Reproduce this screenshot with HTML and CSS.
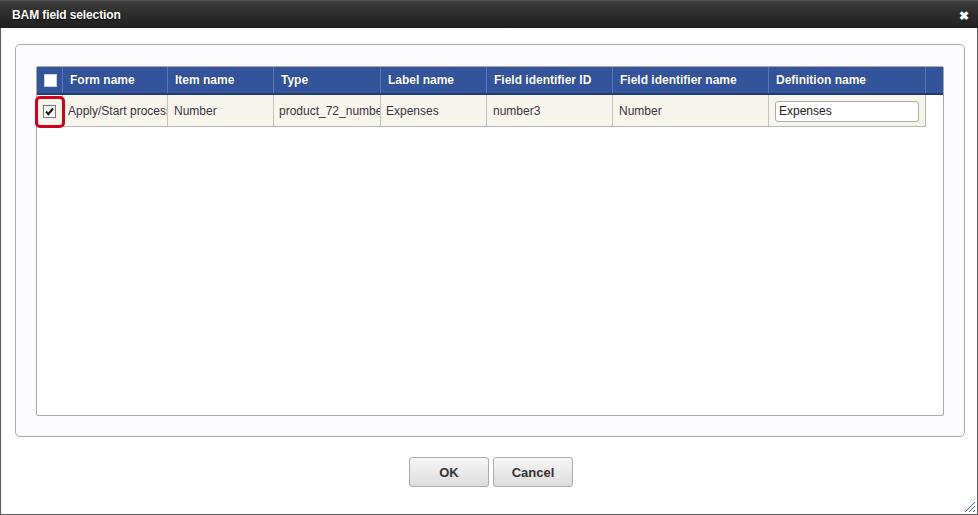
FILE: index.html
```html
<!DOCTYPE html>
<html>
<head>
<meta charset="utf-8">
<link rel="stylesheet" href="styles.css">
</head>
<body>
<div class="window">
  <div class="titlebar">
    <span class="title">BAM field selection</span>
    <span class="close">&#x2716;</span>
  </div>
  <div class="content">
    <div class="panel">
      <div class="grid">
        <div class="head">
          <div class="c c-chk"><span class="box"></span></div>
          <div class="c c-form">Form name</div>
          <div class="c c-item">Item name</div>
          <div class="c c-type">Type</div>
          <div class="c c-label">Label name</div>
          <div class="c c-fid">Field identifier ID</div>
          <div class="c c-fin">Field identifier name</div>
          <div class="c c-def">Definition name</div>
          <div class="c c-pad"></div>
        </div>
        <div class="row">
          <div class="c c-chk">
            <span class="box checked"><svg width="11" height="11" viewBox="0 0 11 11"><path d="M2 5.5 L4.3 8.2 L9 2.5" fill="none" stroke="#111" stroke-width="2"/></svg></span>
            <span class="highlight"></span>
          </div>
          <div class="c c-form">Apply/Start process</div>
          <div class="c c-item">Number</div>
          <div class="c c-type">product_72_number3</div>
          <div class="c c-label">Expenses</div>
          <div class="c c-fid">number3</div>
          <div class="c c-fin">Number</div>
          <div class="c c-def"><span class="input">Expenses</span></div>
        </div>
      </div>
    </div>
    <div class="buttons">
      <span class="btn">OK</span>
      <span class="btn">Cancel</span>
    </div>
  </div>
  <svg class="grip" width="14" height="14" viewBox="0 0 14 14">
    <path d="M3 13 L13 3 M7 13 L13 7 M11 13 L13 11" stroke="#3f6497" stroke-width="1"/>
  </svg>
</div>
</body>
</html>
```
FILE: styles.css
```css
* { box-sizing: border-box; }
html, body { margin: 0; padding: 0; background: #fff; }
body {
  font-family: "Liberation Sans", Arial, sans-serif;
  font-size: 12px;
  color: #333;
}
.window {
  position: relative;
  width: 978px;
  height: 515px;
  border: 1px solid #5a5a5a;
  border-top: none;
  display: flex;
  flex-direction: column;
  background: #fff;
}
.titlebar {
  height: 28px;
  margin: 0 -1px;
  background: linear-gradient(#555 0, #3d3d3d 2px, #2c2c2c 50%, #1f1f1f 100%);
  display: flex;
  align-items: center;
  justify-content: space-between;
  padding: 0 9px 0 12px;
  color: #fff;
}
.title {
  font-weight: bold;
  font-size: 12px;
  letter-spacing: -0.1px;
  text-shadow: 0 1px 1px #000;
  margin-top: 2px;
}
.close {
  font-size: 12px;
  font-weight: bold;
  margin-top: 3px;
}
.content {
  padding: 16px 12px 0 14px;
  flex: 1;
  display: flex;
  flex-direction: column;
}
.panel {
  height: 393px;
  border: 1px solid #a8a8a8;
  border-radius: 5px;
  background: #fbfbfd;
  padding: 21px 20px 20px 20px;
}
.grid {
  height: 350px;
  border: 1px solid #a8a8a8;
  border-radius: 2px;
  background: #fff;
}
.head {
  display: flex;
  height: 28px;
  background: #33539a;
  border-bottom: 2px solid #1f3a74;
  color: #fff;
  font-weight: bold;
}
.head .c {
  border-left: 1px solid #5a78b6;
  padding-left: 7px;
  padding-top: 1px;
  line-height: 25px;
  text-shadow: 0 0 1px #1c3160;
}
.head .c:first-child { border-left: none; }
.c {
  flex: none;
  white-space: nowrap;
  overflow: hidden;
}
.c-chk { width: 25px; }
.c-form { width: 105px; }
.c-item { width: 106px; }
.c-type { width: 107px; }
.c-label { width: 106px; }
.c-fid { width: 126px; }
.c-fin { width: 156px; }
.c-def { width: 157px; }
.c-pad { width: 17px; }
.head .c-chk { padding-left: 7px; padding-top: 0; display: flex; align-items: center; }
.head .c-form { padding-left: 7px; }
.box {
  display: block;
  width: 13px;
  height: 13px;
  background: #fff;
  border: 1px solid #8a8a8a;
}
.head .box { border-color: #d0d0d0; }
.box.checked {
  background: linear-gradient(#f4f4f4, #fff);
  border-color: #777;
  display: flex;
  align-items: center;
  justify-content: center;
}
.row {
  display: flex;
  width: 889px;
  height: 32px;
  background: #f8f6ec;
  border-bottom: 1px solid #b5b5b5;
  border-right: 1px solid #b5b5b5;
}
.row .c {
  border-left: 1px solid #c2c2c2;
  line-height: 29px;
  padding-top: 2px;
  padding-left: 5px;
  color: #3a3244;
}
.row .c:first-child { border-left: none; }
.row .c-chk {
  position: relative;
  overflow: visible;
  padding-left: 6px;
  padding-top: 1px;
  display: flex;
  align-items: center;
}
.row .c-item, .row .c-type, .row .c-fid, .row .c-fin { padding-left: 6px; }
.row .c-type { padding-left: 5px; }
.row .c-label { padding-left: 5px; }
.highlight {
  position: absolute;
  left: -2px;
  top: 1px;
  width: 30px;
  height: 32px;
  border: 3px solid #d0021b;
  border-radius: 5px;
}
.row .c-def { padding-left: 6px; padding-top: 1px; display: flex; align-items: center; }
.input {
  display: block;
  width: 144px;
  height: 21px;
  border: 1px solid #a9a9a9;
  border-radius: 3px;
  background: #fff;
  line-height: 19px;
  padding-left: 3px;
  color: #222;
}
.buttons {
  display: flex;
  justify-content: center;
  gap: 4px;
  margin-top: 20px;
  padding-left: 2px;
}
.btn {
  display: block;
  width: 80px;
  height: 30px;
  border: 1px solid #adadad;
  border-radius: 3px;
  background: linear-gradient(#f7f7f7, #dcdcdc);
  text-align: center;
  line-height: 29px;
  font-weight: bold;
  font-size: 13px;
  color: #333;
}
.grip {
  position: absolute;
  right: 1px;
  bottom: 1px;
}
```
